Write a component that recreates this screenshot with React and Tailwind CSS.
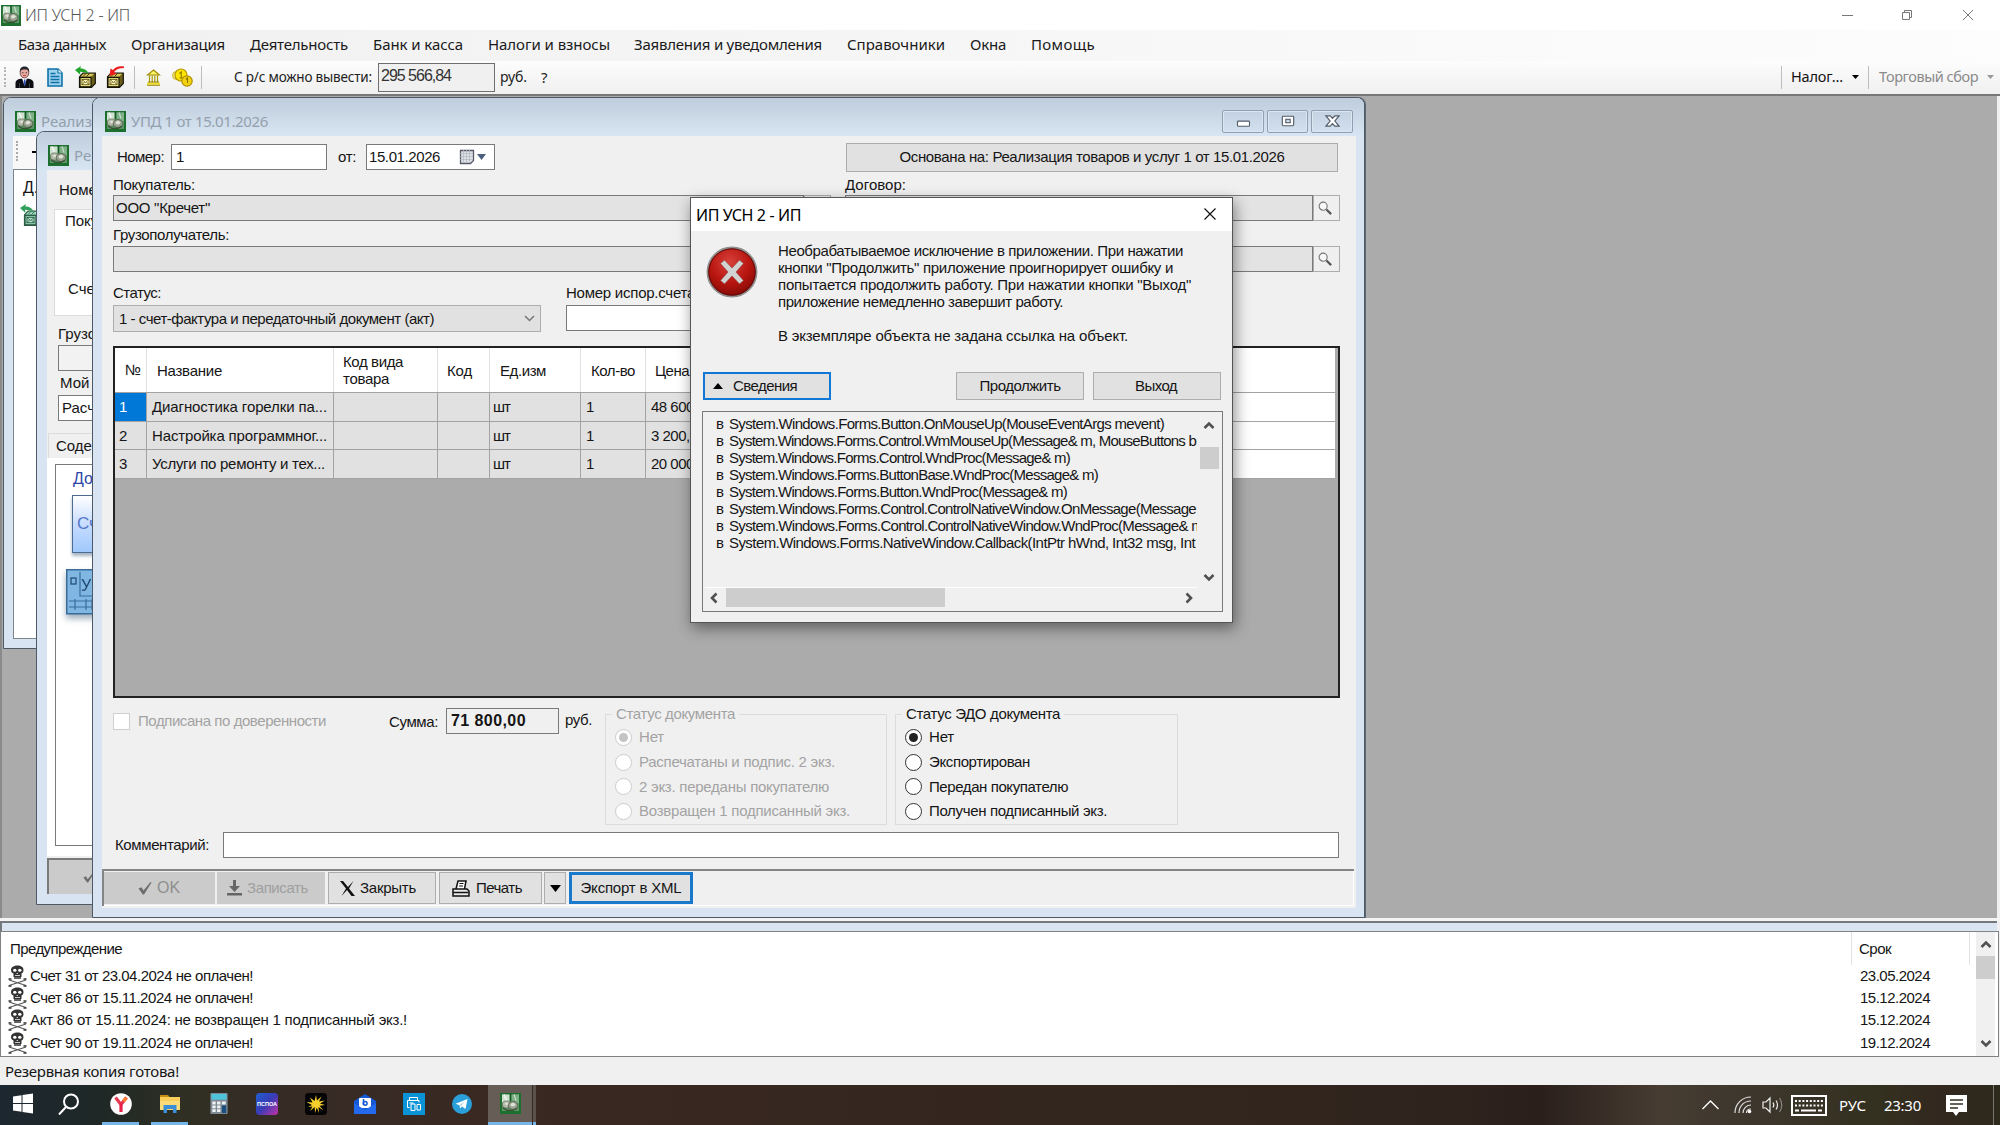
import React, { useLayoutEffect, useRef, useState } from "react";

/* A single-line label whose tracking is computed so that it spans `w` pixels. */
function T({ w, className = "", children }) {
  const ref = useRef(null);
  const [spacing, setSpacing] = useState(null);
  useLayoutEffect(() => {
    if (!w || spacing !== null) return;
    const natural = ref.current.getBoundingClientRect().width;
    setSpacing((w - natural) / Math.max(1, ref.current.textContent.length));
  }, [w, spacing]);
  return (
    <span
      ref={ref}
      className={`inline-block shrink-0 self-auto whitespace-pre ${className}`}
      style={spacing === null ? undefined : { letterSpacing: `${spacing}px`, width: `${w}px` }}
    >
      {children}
    </span>
  );
}

const SEGOE = "font-['Noto_Sans','Open_Sans',sans-serif]";

/* ---------- icons ---------- */

function AppIcon({ className = "w-[21px] h-[21px]" }) {
  return (
    <svg viewBox="0 0 21 21" preserveAspectRatio="none" className={`shrink-0 ${className}`}>
      <rect width="21" height="21" fill="#1d6f2e" />
      <rect x="2" y="1.500" width="17" height="16.500" fill="#5d9467" />
      <path d="M2 1.500h7.500v7L2 11z" fill="#cfe2d1" />
      <path d="M4 1.500l3 7" stroke="#f2f8f2" strokeWidth="1.500" />
      <path d="M11.500 1.500H19v9l-7.500-3z" fill="#7fb088" />
      <path d="M14 1.500l2 6" stroke="#c6dec9" strokeWidth="1.200" />
      <path d="M10.500 0v8" stroke="#0f5a20" strokeWidth="1.400" />
      <ellipse cx="6.500" cy="11.500" rx="4.200" ry="3.600" fill="#b3b9a8" stroke="#59644f" strokeWidth=".7" />
      <ellipse cx="13" cy="12.500" rx="4.800" ry="4" fill="#98a08e" stroke="#4b5643" strokeWidth=".7" />
      <path d="M10.500 11l2.500-1.500 2.800 1.800-1.800 2.200-3-.3z" fill="#dfe2d8" />
      <path d="M4.500 10.500l2.500-1 1.500 1.500-2 1.500z" fill="#e1e4da" />
      <path d="M3 15l4 2.300h6l4-2" stroke="#3a4d36" strokeWidth="1.200" fill="none" />
    </svg>
  );
}

function PersonIcon() {
  return (
    <svg viewBox="0 0 19 22" className="w-[19px] h-[22px]">
      <path d="M0.5 22v-5c0-2.5 2-3.6 5-4.2h8c3 .6 5 1.700 5 4.200v5z" fill="#0b0b12" />
      <path d="M7 12h5l-2.500 8z" fill="#fff" />
      <path d="M9 13.500h1.300l.6 4-1.200 2-1.200-2z" fill="#2a4fb5" />
      <ellipse cx="9.500" cy="6.800" rx="4.300" ry="5.200" fill="#e8a9a0" stroke="#40211c" strokeWidth=".7" />
      <path d="M4.800 6.500C4.500 1.800 7 .5 9.500.5s5.200 1.300 4.700 6c-1-2.500-1.500-3-4.700-3s-4 .8-4.700 3z" fill="#26262e" />
      <path d="M7.200 6.800h1.200M10.700 6.800h1.200" stroke="#222" />
      <path d="M8.200 9.500h2.600" stroke="#b03838" />
      <path d="M4.500 17v5M14.500 17v5" stroke="#4a4a55" strokeWidth=".7" />
    </svg>
  );
}

function DocIcon() {
  return (
    <svg viewBox="0 0 16 19" className="w-[16px] h-[19px]">
      <path d="M1 1h10l4 4v13H1z" fill="#9fd2ee" stroke="#0d72a8" strokeWidth="1.600" />
      <path d="M11 1v4h4" fill="#fff" stroke="#0d72a8" strokeWidth="1.200" />
      <path d="M3.500 5.500h5M3.500 8.500h9M3.500 11.500h9M3.500 14.500h9" stroke="#0d72a8" strokeWidth="1.500" />
    </svg>
  );
}

function BoxIcon({ arrow, faded = false }) {
  const line = faded ? "#2f5a45" : "#161406";
  return (
    <svg viewBox="0 0 21 22" className="h-[22px] w-[21px] shrink-0">
      <path d="M4.500 11L8 7.200h12.300v10.300L16.500 21.300h-12z" fill={faded ? "#4f9a78" : "#6b5e1d"} stroke={line} strokeWidth="1.200" />
      <path d="M5.500 10.500l3-2.800h10.800l-3 2.800z" fill={faded ? "#9ad8b9" : "#d9c95a"} />
      <path d="M11 7.500l-3 3M14.500 7.500l-3 3" stroke={line} strokeWidth=".8" />
      <rect x="5" y="11.500" width="11" height="9.300" fill={faded ? "#8bcfac" : "#f1e588"} stroke={line} strokeWidth="1.200" />
      <rect x="7" y="13.500" width="7" height="5.200" fill={faded ? "#b4e3cc" : "#fdf7b5"} stroke={faded ? line : "#5a5118"} strokeWidth=".8" />
      <path d="M7 13.500l3.500 3 3.500-3M7 18.700l2.500-2.700M14 18.700l-2.500-2.700" fill="none" stroke={faded ? line : "#5a5118"} strokeWidth=".8" />
      {arrow === "green" ? (
        <path d="M0 4l6-4-.7 2.500c4 0 7 1.500 8 5C11 6.500 8.500 6 5 5.800L5.500 9z" fill={faded ? "#2f9f5b" : "#21a52b"} />
      ) : (
        <path d="M21 .5c-5-.8-9 .5-11 3.500L7.500 2.500 6.500 10l7-2-2.300-2C13 3.500 16 2 21 2z" fill="#ee1c1c" />
      )}
    </svg>
  );
}

function BankIcon() {
  return (
    <svg viewBox="0 0 15 17" className="w-[15px] h-[17px]">
      <path d="M7.500 1L13.500 6h-12z" fill="#fdf36a" stroke="#a08c00" strokeWidth="1.200" />
      <path d="M3.500 6.500v7M6.200 6.500v7M8.800 6.500v7M11.500 6.500v7" stroke="#a99700" strokeWidth="1.200" />
      <path d="M1 14.700h13" stroke="#f0df20" strokeWidth="2" />
      <path d="M1 16.300h13M2 13h11" stroke="#8a7900" strokeWidth=".9" />
    </svg>
  );
}

function CoinsIcon() {
  return (
    <svg viewBox="0 0 21 19" className="w-[21px] h-[19px]">
      <circle cx="4.500" cy="7.500" r="4" fill="#efe08a" stroke="#c9b019" strokeWidth=".9" />
      <circle cx="9" cy="7" r="6" fill="#ffe600" stroke="#b89b00" strokeWidth="1.200" />
      <path d="M7.500 5.500L9.200 4v6M7.500 10h3.500" stroke="#8a7400" strokeWidth="1.100" fill="none" />
      <circle cx="15" cy="13" r="5.200" fill="#f3d311" stroke="#b08f00" strokeWidth="1.200" />
      <path d="M14 11.500l1.500-1.500v5" stroke="#8a7400" strokeWidth="1.100" fill="none" />
    </svg>
  );
}

function Tri({ dir = "down", className = "w-[8px] h-[5px]", fill = "#000" }) {
  return (
    <svg viewBox="0 0 10 6" preserveAspectRatio="none" className={`shrink-0 ${className}`}>
      <path d={dir === "down" ? "M0 0h10L5 6z" : "M0 6h10L5 0z"} fill={fill} />
    </svg>
  );
}

const chevrons = { up: "M1.500 7L6 2.500 10.500 7", down: "M1.500 2L6 6.500 10.500 2", left: "M7.500 1.500L3 6l4.500 4.500", right: "M3.500 1.500L8 6l-4.500 4.500" };
function Chev({ dir, className, stroke = "#505050", sw = 2.6 }) {
  return (
    <svg viewBox={dir === "up" || dir === "down" ? "0 0 12 9" : "0 0 11 12"} className={`shrink-0 ${className}`}>
      <path d={chevrons[dir]} fill="none" stroke={stroke} strokeWidth={sw} />
    </svg>
  );
}

function Loupe() {
  return (
    <svg viewBox="0 0 16 16" className="w-[15px] h-[15px]">
      <circle cx="5.500" cy="5.500" r="4.300" fill="#f7f7f7" stroke="#777" strokeWidth="1.200" />
      <path d="M9 9l5 5" stroke="#555" strokeWidth="2.300" />
    </svg>
  );
}

function Check({ className }) {
  return (
    <svg viewBox="0 0 14 14" className={className}>
      <path d="M.5 7.500l3-1.300 2 3.300L12.500 1l1 .6L6 13.500H4.800z" fill="#6d6d6d" />
    </svg>
  );
}

function Skull() {
  return (
    <svg viewBox="0 0 19 22" className="w-[19px] h-[22px] shrink-0">
      <path d="M3 5c0-3 3-4.500 6.500-4.500S15.500 2 15.500 5c0 2-.7 3-2 3.500V12h-8V8.500C4 8 3 7 3 5z" fill="#333" />
      <ellipse cx="6.800" cy="5.200" rx="1.700" ry="1.500" fill="#fff" />
      <ellipse cx="11.800" cy="5.200" rx="1.700" ry="1.500" fill="#fff" />
      <path d="M8.600 8.500h1.400M7 10.500h5" stroke="#ddd" strokeWidth=".9" />
      <path d="M1 15l17 5.500M18 15L1 20.500" stroke="#555" strokeWidth="1.300" />
      <path d="M.5 14h3M15.500 14h3M.5 21h3M15.500 21h3M6 13h7" stroke="#333" strokeWidth="1.400" />
    </svg>
  );
}

/* ---------- small controls ---------- */

const Sep = ({ className = "" }) => <div className={`h-[23px] w-px bg-[#bdbdbd] ${className}`} />;

function Field({ className = "", children }) {
  return (
    <div className={`flex h-[26px] shrink-0 items-center border border-[#7a7a7a] ${className}`}>{children}</div>
  );
}

function LoupeButton({ className = "" }) {
  return (
    <div className={`flex h-[26px] w-[27px] shrink-0 items-center justify-center border border-[#adadad] bg-[#efefef] pr-[2px] ${className}`}>
      <Loupe />
    </div>
  );
}

function Radio({ checked, disabled }) {
  return (
    <span className={`flex size-[17px] shrink-0 items-center justify-center rounded-full border bg-white ${disabled ? "border-[#cccccc]" : "border-[#333]"}`}>
      {checked && <span className={`size-[9px] rounded-full ${disabled ? "bg-[#c4c4c4]" : "bg-[#222]"}`} />}
    </span>
  );
}

function GroupBox({ title, titleWidth, items, disabled, className }) {
  return (
    <div className={`relative mt-[16px] h-[111px] border border-[#dcdcdc] pt-[10px] pl-[9px] ${disabled ? "text-[#a3a3a3]" : ""} ${className}`}>
      <div className="absolute -top-[12px] left-[6px] flex h-[22px] items-center bg-[#f0f0f0] px-[4px]">
        <T w={titleWidth}>{title}</T>
      </div>
      {items.map(([label, w], i) => (
        <div key={label} className="flex h-[24.700px] items-center gap-[7px]">
          <Radio checked={i === 0} disabled={disabled} />
          <T w={w}>{label}</T>
        </div>
      ))}
    </div>
  );
}

/* ---------- top bars ---------- */

const menu = [
  ["База данных", 88, "ml-[18px]"],
  ["Организация", 94, "ml-[25px]"],
  ["Деятельность", 98, "ml-[25px]"],
  ["Банк и касса", 90, "ml-[25px]"],
  ["Налоги и взносы", 122, "ml-[25px]"],
  ["Заявления и уведомления", 188, "ml-[24px]"],
  ["Справочники", 98, "ml-[25px]"],
  ["Окна", 36, "ml-[25px]"],
  ["Помощь", 64, "ml-[25px]"],
];

function TitleBar() {
  return (
    <div className={`flex h-[30px] items-center bg-white pl-px ${SEGOE}`}>
      <AppIcon className="h-[21px] w-[20px]" />
      <T w={105} className="ml-[4px] font-light text-[16px] text-[#555]">ИП УСН 2 - ИП</T>
      <svg viewBox="0 0 132 14" className="mr-[26px] mb-px ml-auto h-[14px] w-[132px]" fill="none" stroke="#777" strokeWidth="1">
        <path d="M0 7.500h11" />
        <path d="M60.500 4.500h7v7h-7zM62.500 4.500v-2h7v7h-2" />
        <path d="M121 2l10 10M131 2l-10 10" />
      </svg>
    </div>
  );
}

function MenuBar() {
  return (
    <div className={`flex h-[31px] items-center bg-gradient-to-r from-[#f0f0f0] to-[#fdfdfd] pb-[3px] text-[15px] text-[#1a1a1a] ${SEGOE}`}>
      {menu.map(([label, w, ml]) => (
        <T key={label} w={w} className={ml}>{label}</T>
      ))}
    </div>
  );
}

function Toolbar() {
  return (
    <div className={`flex h-[35px] items-center border-b-2 border-[#777] bg-gradient-to-b from-[#fdfdfd] to-[#efefef] pb-px ${SEGOE}`}>
      <div className="ml-[4px] h-[20px] border-l-2 border-dotted border-[#b5b5b5]" />
      <div className="ml-[9px]"><PersonIcon /></div>
      <div className="ml-[13px]"><DocIcon /></div>
      <div className="ml-[12px]"><BoxIcon arrow="green" /></div>
      <div className="ml-[7px]"><BoxIcon arrow="red" /></div>
      <Sep className="ml-[10px]" />
      <div className="ml-[11px]"><BankIcon /></div>
      <div className="ml-[11px]"><CoinsIcon /></div>
      <Sep className="ml-[8px]" />
      <T w={138} className="ml-[32px] text-[13.500px] text-[#222]">С р/с можно вывести:</T>
      <div className="ml-[6px] flex h-[29px] w-[117px] items-start border border-[#6f6f6f] bg-[#f0f0f0] pl-[2px] font-['Liberation_Sans',sans-serif]">
        <T w={70} className="text-[16px] leading-[24px] text-[#333]">295 566,84</T>
      </div>
      <T w={27} className="ml-[5px] text-[14px] text-[#222]">руб.</T>
      <T w={7} className="ml-[14px] text-[15px] text-[#222]">?</T>
      <Sep className="ml-auto" />
      <T w={52} className="mb-[2px] ml-[9px] text-[14.500px] text-[#111]">Налог...</T>
      <Tri className="ml-[9px] h-[4px] w-[7px]" />
      <Sep className="ml-[9px]" />
      <T w={99} className="mb-[2px] ml-[10px] text-[14.500px] text-[#8a8a8a]">Торговый сбор</T>
      <Tri className="mr-[6px] ml-[9px] h-[4px] w-[7px]" fill="#9a9a9a" />
    </div>
  );
}

/* ---------- child windows behind ---------- */

function ChildTitle({ text, className = "" }) {
  return (
    <div className={`flex h-[38px] shrink-0 items-center bg-gradient-to-b from-[#bfcddc] to-[#d8e5f2] ${className}`}>
      <AppIcon className="ml-[11px] h-[21px] w-[21px]" />
      <T className={`ml-[5px] text-[15px] text-[#93a0ad] ${SEGOE}`}>{text}</T>
    </div>
  );
}

function ListWindow() {
  return (
    <div className="absolute top-[1px] left-[3px] flex h-[552px] w-[300px] flex-col overflow-hidden rounded-tl-[8px] border border-[#4d5a66] bg-[#d8e4f1] pb-[9px]">
      <ChildTitle text="Реализ" className="pt-[8px]" />
      <div className="ml-[9px] flex h-[33px] shrink-0 items-start bg-[#f8f8f8]">
        <div className="mt-[5px] ml-[3px] h-[20px] border-l-2 border-dotted border-[#a9a9a9]" />
        <div className="mt-[15px] ml-[14px] h-[2px] w-[8px] bg-black" />
      </div>
      <div className="ml-[9px] flex-1 border border-[#7c868f] bg-white pt-[8px] pl-[6px]">
        <div className="pl-[3px]"><T className="text-[16px] leading-[20px]">Д.</T></div>
        <div className="mt-[6px]"><BoxIcon arrow="green" faded /></div>
      </div>
    </div>
  );
}

function SaleWindow() {
  return (
    <div className="absolute top-[35px] left-[36px] flex h-[774px] w-[400px] flex-col overflow-hidden rounded-tl-[8px] border border-[#4d5a66] bg-[#d8e4f1] pb-[10px]">
      <ChildTitle text="Ре" className="pt-[8px]" />
      <div className="ml-[10px] flex flex-1 flex-col bg-[#f0f0f0]">
        <div className="flex h-[39px] shrink-0 items-center pl-[12px]"><T>Номе</T></div>
        <div className="ml-[7px] flex h-[107px] shrink-0 flex-col border border-[#dcdcdc] bg-white pl-[10px]">
          <T className="mt-[1px]">Поку</T>
          <T className="mt-[48px] ml-[3px]">Сче</T>
        </div>
        <div className="flex h-[29px] shrink-0 items-center pt-[6px] pl-[11px]"><T>Грузо</T></div>
        <div className="ml-[11px] h-[26px] shrink-0 border border-[#7a7a7a] bg-[#f2f2f2]" />
        <div className="flex h-[24px] shrink-0 items-center pl-[13px]"><T>Мой</T></div>
        <div className="ml-[11px] flex h-[26px] shrink-0 items-center border border-[#7a7a7a] bg-white pl-[3px]"><T>Расч</T></div>
        <div className="mt-[12px] ml-[1px] flex h-[25px] shrink-0 items-center border border-b-0 border-[#dcdcdc] pl-[7px]"><T>Содер</T></div>
        <div className="flex h-[398px] shrink-0 flex-col bg-white pt-[6px]">
          <div className="ml-[8px] flex h-[382px] flex-col border border-[#7a7a7a]">
            <T className="mt-[4px] ml-[17px] text-[16px] text-[#2d46a8]">До</T>
            <div className="mt-[6px] ml-[16px] flex h-[58px] items-center border border-[#4d6c93] bg-gradient-to-b from-white via-[#c7dcff] to-[#9fc8fb] pl-[4px] shadow-[0_3px_3px_rgba(60,90,120,0.45)]">
              <T className="text-[17px] text-[#5577c9]">Сч</T>
            </div>
            <svg viewBox="0 0 60 46" className="mt-[16px] ml-[10px] h-[46px] w-[60px] shrink-0 drop-shadow-[0_4px_3px_rgba(60,90,120,0.5)]">
              <rect x=".75" y=".75" width="58" height="44" fill="#7fb6e2" stroke="#3a6d99" strokeWidth="1.500" />
              <rect x="5" y="9" width="5" height="6" fill="none" stroke="#1e4872" strokeWidth="1.200" />
              <path d="M14 3v24h44M3 32h54M3 38h54M9 30v11M20 30v11M26 30v11" stroke="#3b6d9b" strokeWidth="1.200" fill="none" />
              <text x="15" y="22" fontSize="16" fill="#1e4872" fontFamily="Liberation Sans">УП</text>
            </svg>
          </div>
        </div>
        <div className="mt-[2px] flex h-[36px] items-center border-t-2 border-l-2 border-[#7a7a7a] bg-[#cbcbcb] pl-[33px]">
          <Check className="h-[12px] w-[14px]" />
        </div>
      </div>
    </div>
  );
}

/* ---------- main document window ---------- */

function WindowButtons() {
  const box = "flex h-[23px] items-center justify-center rounded-[2px] border border-[#8fa0b3] bg-gradient-to-b from-[#c3d1e2] to-[#d3e0ee] shadow-[inset_0_0_0_1px_#dbe6f1]";
  return (
    <div className="mr-[3px] ml-auto flex gap-[3px]">
      <div className={`${box} w-[42px]`}>
        <svg viewBox="0 0 16 14" className="mt-[2px] h-[12px] w-[15px]"><rect x="1" y="6" width="14" height="6" rx="1" fill="#fff" stroke="#525c68" strokeWidth="1.300" /></svg>
      </div>
      <div className={`${box} w-[41px]`}>
        <svg viewBox="0 0 16 14" preserveAspectRatio="none" className="h-[12px] w-[14px]" stroke="#525c68" strokeWidth="1.300">
          <rect x="1.500" y="1.500" width="13" height="11" rx="1" fill="#fff" />
          <rect x="5.500" y="5" width="5" height="4" fill="#d5dfea" />
        </svg>
      </div>
      <div className={`${box} w-[42px]`}>
        <svg viewBox="0 0 16 14" preserveAspectRatio="none" className="h-[12px] w-[15px]">
          <path d="M1 1h4.500L8 4l2.500-3H15l-4.500 6L15 13h-4.500L8 10l-2.500 3H1l4.500-6z" fill="#fff" stroke="#525c68" strokeWidth="1.300" />
        </svg>
      </div>
    </div>
  );
}

const gridRows = [
  ["1", "Диагностика горелки па...", 175, "48 600,00"],
  ["2", "Настройка программног...", 175, "3 200,00"],
  ["3", "Услуги по ремонту и тех...", 173, "20 000,00"],
];
const GRID = "grid grid-cols-[32px_187px_104px_52px_91px_65px_90px_1fr]";

function ItemsGrid() {
  const head = "flex items-center border-r border-[#e2e2e2]";
  const cell = "flex items-center border-r border-b border-[#a3a3a3] bg-[#e1e1e1]";
  return (
    <div className="mt-[14px] ml-[11px] h-[352px] w-[1227px] border-2 border-[#222] bg-[#ababab] pr-[3px]">
      <div className={`${GRID} h-[45px] border-b border-[#a3a3a3] bg-white`}>
        <div className={`${head} pl-[10px]`}><T w={15}>№</T></div>
        <div className={`${head} pt-[2px] pl-[10px]`}><T w={65}>Название</T></div>
        <div className={`${head} flex-col items-start! justify-center pl-[9px] leading-[17px]`}>
          <T w={60}>Код вида</T>
          <T w={46}>товара</T>
        </div>
        <div className={`${head} pt-[2px] pl-[9px]`}><T w={25}>Код</T></div>
        <div className={`${head} pt-[2px] pl-[10px]`}><T w={46}>Ед.изм</T></div>
        <div className={`${head} pt-[2px] pl-[10px]`}><T w={44}>Кол-во</T></div>
        <div className={`${head} pt-[2px] pl-[9px]`}><T w={34}>Цена</T></div>
        <div />
      </div>
      {gridRows.map(([n, name, w, price]) => (
        <div key={n} className={`${GRID} h-[28.700px]`}>
          <div className={`${cell} pl-[4px] ${n === "1" ? "bg-[#0078d7]! text-white" : ""}`}>{n}</div>
          <div className={`${cell} pl-[5px]`}><T w={w}>{name}</T></div>
          <div className={cell} />
          <div className={cell} />
          <div className={`${cell} pl-[3px]`}><T w={17}>шт</T></div>
          <div className={`${cell} pl-[5px]`}>1</div>
          <div className={`${cell} pl-[5px]`}><T className="tracking-[-0.500px]">{price}</T></div>
          <div className="border-b border-[#a3a3a3] bg-white" />
        </div>
      ))}
    </div>
  );
}

function DocumentWindow() {
  return (
    <div className="absolute top-[1px] left-[92px] flex h-[821px] w-[1273px] flex-col overflow-hidden rounded-t-[8px] border border-[#4d5a66] bg-[#d8e4f1] pr-[8px] pb-[9px] pl-[9px] shadow-[1px_0_0_#5c6874]">
      <div className="-mr-[8px] -ml-[9px] flex h-[38px] shrink-0 items-center bg-gradient-to-b from-[#bfcddc] to-[#d8e5f2] pt-[8px] pr-[8px]">
        <AppIcon className="ml-[12px] h-[21px] w-[21px]" />
        <T w={137} className={`ml-[5px] text-[15px] text-[#93a0ad] ${SEGOE}`}>УПД 1 от 15.01.2026</T>
        <WindowButtons />
      </div>
      <div className="flex flex-1 flex-col bg-[#f0f0f0]">
        <div className="flex h-[42px] items-center">
          <T w={47} className="ml-[15px]">Номер:</T>
          <Field className="ml-[7px] w-[156px] bg-white pl-[4px]">1</Field>
          <T w={18} className="ml-[11px]">от:</T>
          <Field className="ml-[10px] w-[129px] bg-white pl-[2px]">
            <T w={71}>15.01.2026</T>
            <svg viewBox="0 0 16 16" className="ml-[19px] size-[16px]">
              <path d="M1.500 1.500h13v10l-3 3h-10z" fill="#dfe1e8" stroke="#565a66" strokeWidth="1.300" />
              <path d="M1 4.500h13M1 7.500h13M1 10.500h13M4.500 1v13M7.500 1v13M10.500 1v13" stroke="#b3b7c2" strokeWidth=".7" />
            </svg>
            <Tri className="ml-[2px] h-[6px] w-[9px]" fill="#4b6080" />
          </Field>
          <div className="ml-[351px] flex h-[29px] w-[492px] items-center justify-center border border-[#adadad] bg-[#e1e1e1]">
            <T w={385}>Основана на: Реализация товаров и услуг 1 от 15.01.2026</T>
          </div>
        </div>
        <div className="flex h-[17px] items-center pb-[4px] pl-[11px]">
          <T w={82}>Покупатель:</T>
          <T w={61} className="ml-[650px]">Договор:</T>
        </div>
        <div className="flex pl-[11px]">
          <Field className="w-[691px] bg-[#e3e3e3] pl-[2px]"><T w={94}>ООО "Кречет"</T></Field>
          <LoupeButton />
          <Field className="ml-[14px] w-[468px] bg-[#e3e3e3]" />
          <LoupeButton />
        </div>
        <div className="flex h-[25px] items-center pt-[2px] pl-[11px]"><T w={116}>Грузополучатель:</T></div>
        <div className="flex pl-[11px]">
          <Field className="w-[691px] bg-[#e3e3e3]" />
          <LoupeButton />
          <Field className="ml-[14px] w-[468px] bg-[#e3e3e3]" />
          <LoupeButton />
        </div>
        <div className="flex h-[33px] items-center pt-[9px] pl-[11px]">
          <T w={48}>Статус:</T>
          <T w={133} className="ml-[405px]">Номер испор.счета:</T>
        </div>
        <div className="flex h-[27px] pl-[11px]">
          <div className="flex w-[428px] items-center border border-[#adadad] bg-[#e1e1e1] pl-[5px]">
            <T w={315}>1 - счет-фактура и передаточный документ (акт)</T>
            <Chev dir="down" className="mr-[4px] ml-auto h-[9px] w-[13px]" stroke="#777" sw={1.5} />
          </div>
          <Field className="ml-[25px] w-[200px] bg-white" />
        </div>
        <ItemsGrid />
        <div className="flex h-[134px] items-start pl-[11px]">
          <div className="mt-[15px] size-[17px] border border-[#cfcfcf] bg-white" />
          <div className="mt-[10px] ml-[8px] flex h-[26px] items-center text-[#a3a3a3]"><T w={188}>Подписана по доверенности</T></div>
          <div className="mt-[10px] ml-[63px] flex h-[28px] items-center"><T w={49}>Сумма:</T></div>
          <Field className="mt-[10px] ml-[8px] w-[113px] pl-[4px]"><T w={75} className="text-[16px] font-bold">71 800,00</T></Field>
          <div className="mt-[10px] ml-[6px] flex h-[24px] items-center"><T w={27}>руб.</T></div>
          <GroupBox
            className="ml-[13px] w-[282px]"
            disabled
            title="Статус документа"
            titleWidth={119}
            items={[["Нет", 25], ["Распечатаны и подпис. 2 экз.", 196], ["2 экз. переданы покупателю", 190], ["Возвращен 1 подписанный экз.", 211]]}
          />
          <GroupBox
            className="ml-[8px] w-[283px]"
            title="Статус ЭДО документа"
            titleWidth={154}
            items={[["Нет", 25], ["Экспортирован", 101], ["Передан покупателю", 139], ["Получен подписанный экз.", 178]]}
          />
        </div>
        <div className="flex items-center pl-[13px]">
          <T w={94}>Комментарий:</T>
          <div className="ml-[14px] h-[26px] w-[1116px] border border-[#7a7a7a] bg-white" />
        </div>
        <div className="mt-[11px] mr-[2px] flex h-[37px] items-stretch gap-[2px] border-t-2 border-l-2 border-[#858585] pt-[1px] pb-[2px] shadow-[inset_-1px_-1px_0_#fff]">
          <div className="flex w-[111px] items-center bg-[#cbcbcb] pl-[34px] text-[#8f8f8f]">
            <Check className="h-[14px] w-[14px]" />
            <T w={23} className="ml-[5px] text-[16px]">OK</T>
          </div>
          <div className="flex w-[108px] items-center bg-[#cbcbcb] pl-[10px] text-[#9f9f9f]">
            <svg viewBox="0 0 15 16" className="h-[16px] w-[15px]"><path d="M6 0h3v6h4l-5.500 6L2 6h4zM0 13h15v2.500H0z" fill="#666" /></svg>
            <T w={61} className="ml-[5px]">Записать</T>
          </div>
          <div className="ml-px flex w-[108px] items-center border border-[#adadad] bg-[#e1e1e1] pl-[11px]">
            <svg viewBox="0 0 15 15" className="h-[15px] w-[15px]"><path d="M0 0h3l5 6 5.500-6L9 7.500l6 7.500h-3.500L7 9l-5.500 6L6 7.500z" fill="#111" /></svg>
            <T w={56} className="ml-[5px]">Закрыть</T>
          </div>
          <div className="ml-px flex w-[103px] items-center border border-[#adadad] bg-[#e1e1e1] pl-[12px]">
            <svg viewBox="0 0 18 17" className="h-[17px] w-[18px]" fill="none" stroke="#111" strokeWidth="1.500">
              <path d="M4 9L6 1h8l-1.500 8" fill="#fff" />
              <path d="M7.500 3.500h4M7 6h4" strokeWidth="1.100" />
              <path d="M1 9h14l2 2v5H1z" fill="#e8e8e8" />
              <path d="M1 12.500h15.500" />
            </svg>
            <T w={46} className="ml-[6px]">Печать</T>
          </div>
          <div className="flex w-[22px] items-center justify-center border border-[#adadad] bg-[#e1e1e1]">
            <Tri className="h-[7px] w-[11px]" />
          </div>
          <div className="ml-px flex w-[124px] items-center justify-center border-[3px] border-[#1979ca] bg-[#e1e1e1]">
            <T w={101}>Экспорт в XML</T>
          </div>
        </div>
      </div>
    </div>
  );
}

/* ---------- error dialog ---------- */

const trace = [
  ["System.Windows.Forms.Button.OnMouseUp(MouseEventArgs mevent)", 435],
  ["System.Windows.Forms.Control.WmMouseUp(Message& m, MouseButtons b", 467],
  ["System.Windows.Forms.Control.WndProc(Message& m)", 341],
  ["System.Windows.Forms.ButtonBase.WndProc(Message& m)", 369],
  ["System.Windows.Forms.Button.WndProc(Message& m)", 338],
  ["System.Windows.Forms.Control.ControlNativeWindow.OnMessage(Message", 467],
  ["System.Windows.Forms.Control.ControlNativeWindow.WndProc(Message& m", 474],
  ["System.Windows.Forms.NativeWindow.Callback(IntPtr hWnd, Int32 msg, Int", 466],
];

function ErrorDialog() {
  return (
    <div className="absolute top-[101px] left-[690px] flex h-[426px] w-[543px] flex-col border border-[#555] bg-[#f0f0f0] shadow-[2px_5px_14px_rgba(0,0,0,0.45)]">
      <div className={`flex h-[33px] shrink-0 items-center bg-white ${SEGOE}`}>
        <T w={105} className="ml-[5px] text-[16px] text-black">ИП УСН 2 - ИП</T>
        <svg viewBox="0 0 12 12" className="mr-[16px] mb-[2px] ml-auto size-[12px]"><path d="M.5.5l11 11M11.500.5l-11 11" stroke="#111" strokeWidth="1.200" /></svg>
      </div>
      <div className="flex h-[141px] shrink-0">
        <svg viewBox="0 0 52 52" className="mt-[15px] ml-[15px] size-[52px]">
          <defs>
            <radialGradient id="err" cx="45%" cy="30%" r="75%">
              <stop offset="0" stopColor="#d8403a" />
              <stop offset=".55" stopColor="#b8150f" />
              <stop offset="1" stopColor="#7c0906" />
            </radialGradient>
          </defs>
          <circle cx="26" cy="26" r="24.500" fill="url(#err)" stroke="#8e8e8e" strokeWidth="1.800" />
          <circle cx="26" cy="26" r="23.200" fill="none" stroke="#5d0a08" strokeWidth="1" />
          <path d="M18.500 14l7.500 8 7.500-8 4 3.500-7.500 8.500 7.500 8.500-4 3.500-7.500-8-7.500 8-4-3.500L22 26l-7.500-8.500z" fill="#d2d2d2" stroke="#8c3a36" strokeWidth=".6" />
        </svg>
        <div className="mt-[11px] ml-[20px] flex flex-col items-start leading-[17px]">
          <T w={405}>Необрабатываемое исключение в приложении. При нажатии</T>
          <T w={395}>кнопки "Продолжить" приложение проигнорирует ошибку и</T>
          <T w={413}>попытается продолжить работу. При нажатии кнопки "Выход"</T>
          <T w={285}>приложение немедленно завершит работу.</T>
          <T w={350} className="mt-[17px]">В экземпляре объекта не задана ссылка на объект.</T>
        </div>
      </div>
      <div className="flex h-[28px] shrink-0 pr-[11px] pl-[12px]">
        <div className="flex w-[128px] items-center border-2 border-[#0f78d4] bg-[#e1e1e1] pl-[8px]">
          <Tri dir="up" className="h-[6px] w-[10px]" />
          <T w={64} className="ml-[10px]">Сведения</T>
        </div>
        <div className="ml-auto flex w-[128px] items-center justify-center border border-[#adadad] bg-[#e1e1e1]"><T w={81}>Продолжить</T></div>
        <div className="ml-[9px] flex w-[128px] items-center justify-center border border-[#adadad] bg-[#e1e1e1] pr-[2px]"><T w={42}>Выход</T></div>
      </div>
      <div className="mt-[11px] ml-[11px] flex h-[201px] w-[521px] flex-col border border-[#7a7a7a] px-[2px] pt-[2px] pb-[3px]">
        <div className="flex flex-1">
          <div className="flex w-[492px] flex-col overflow-hidden border-b border-white pt-[1px] pl-[11px] leading-[17px]">
            {trace.map(([line, w]) => (
              <div key={line} className="flex">
                <T w={8} className="mr-[5px]">в</T>
                <T w={w}>{line}</T>
              </div>
            ))}
          </div>
          <div className="mr-px ml-auto flex w-[20px] flex-col items-center pt-[7px] pb-[6px]">
            <Chev dir="up" className="h-[9px] w-[12px]" />
            <div className="mt-[17px] h-[22px] w-[19px] bg-[#cdcdcd]" />
            <Chev dir="down" className="mt-auto h-[9px] w-[12px]" />
          </div>
        </div>
        <div className="flex h-[20px] shrink-0 items-center pb-px pl-[4px]">
          <Chev dir="left" className="h-[12px] w-[11px]" />
          <div className="ml-[6px] h-[19px] w-[219px] bg-[#cdcdcd]" />
          <Chev dir="right" className="mr-[26px] ml-auto h-[12px] w-[11px]" />
        </div>
      </div>
    </div>
  );
}

/* ---------- warnings list and status ---------- */

const warnings = [
  ["Счет 31 от 23.04.2024 не оплачен!", 223, "23.05.2024"],
  ["Счет 86 от 15.11.2024 не оплачен!", 223, "15.12.2024"],
  ["Акт 86 от 15.11.2024: не возвращен 1 подписанный экз.!", 377, "15.12.2024"],
  ["Счет 90 от 19.11.2024 не оплачен!", 223, "19.12.2024"],
];

function Warnings() {
  return (
    <div className="flex h-[126px] w-[1999px] border border-[#808285] bg-white">
      <div className="flex w-[1851px] flex-col">
        <div className="flex h-[33px] items-center border-r border-[#e2e2e2] pl-[9px]"><T w={112}>Предупреждение</T></div>
        {warnings.map(([text, w]) => (
          <div key={text} className="flex h-[22.200px] items-center pl-[7px]">
            <Skull />
            <T w={w} className="ml-[3px]">{text}</T>
          </div>
        ))}
      </div>
      <div className="flex w-[118px] flex-col pl-[7px]">
        <div className="flex h-[33px] items-center border-r border-[#e2e2e2]"><T w={32}>Срок</T></div>
        {warnings.map(([text, , date]) => (
          <div key={text} className="flex h-[22.200px] items-center pl-px"><T w={70}>{date}</T></div>
        ))}
      </div>
      <div className="mr-[3px] ml-auto flex w-[19px] flex-col items-center bg-[#f0f0f0] pt-[8px] pb-[8px]">
        <Chev dir="up" className="h-[9px] w-[12px]" />
        <div className="mt-[7px] h-[23px] w-[19px] bg-[#cdcdcd]" />
        <Chev dir="down" className="mt-auto h-[9px] w-[12px]" />
      </div>
    </div>
  );
}

/* ---------- taskbar ---------- */

function Slot({ active, open, className, children }) {
  return (
    <div className={`flex h-full shrink-0 items-center justify-center border-b-[3px] ${open ? "border-[#76b5e8]" : "border-transparent"} ${active ? "bg-[#665d56]" : ""} ${className}`}>
      {children}
    </div>
  );
}

function Taskbar() {
  return (
    <div className={`flex h-[40px] items-center bg-[linear-gradient(90deg,#1d2730_0%,#1f2826_5%,#2f2f23_9%,#352c25_13%,#3a2822_25%,#35271f_45%,#2f241d_72%,#2a1f1b_77%,#463c32_83%,#3c362c_88%,#33301f_94%,#33281f_97%,#2d2a1c_100%)] text-white ${SEGOE}`}>
      <Slot className="w-[46px]">
        <svg viewBox="0 0 20 20" className="h-[21px] w-[20px]"><path d="M0 3l8.500-1.200v7.700H0zM9.500 1.600L20 0v9.500H9.500zM0 10.500h8.500v7.700L0 17zM9.500 10.500H20V20L9.500 18.400z" fill="#fff" /></svg>
      </Slot>
      <Slot className="w-[46px]">
        <svg viewBox="0 0 22 22" className="size-[22px]" fill="none" stroke="#fff" strokeWidth="2"><circle cx="13" cy="8.500" r="7" /><path d="M8 14l-7 7.500" /></svg>
      </Slot>
      <Slot open className="ml-[10px] w-[37px]">
        <svg viewBox="0 0 22 22" className="size-[22px]"><circle cx="11" cy="11" r="10.800" fill="#fff" /><path d="M5.500 4.500l5.500 7 5.500-7" fill="none" stroke="#e8384f" strokeWidth="3.200" /><path d="M11 10.500V19" stroke="#e8204a" strokeWidth="3.200" /><path d="M16.500 4.500l-3 3.800" stroke="#ff7a2e" strokeWidth="3.200" /></svg>
      </Slot>
      <Slot open className="ml-[12px] w-[37px]">
        <svg viewBox="0 0 20 20" className="size-[20px]"><path d="M0 1h8l2 2.500H0z" fill="#c98c12" /><rect y="3" width="20" height="13" fill="#f9cf59" /><path d="M0 7h20v9H0z" fill="#fcd979" /><path d="M3.500 19v-8h13v8h-3.500v-4h-6v4z" fill="#3a8fd6" /></svg>
      </Slot>
      <Slot className="ml-[12px] w-[37px]">
        <svg viewBox="0 0 18 22" className="h-[21px] w-[18px]"><rect width="18" height="22" rx="1" fill="#7f8b94" /><rect x="1" y="1" width="16" height="6" fill="#4fc3d9" /><path d="M2 9h3.500v3H2zM7 9h3.500v3H7zM12 9h4v3h-4zM2 13h3.500v3H2zM7 13h3.500v3H7zM2 17h3.500v3H2zM7 17h3.500v3H7z" fill="#eef2f4" /><rect x="12" y="13" width="4.500" height="8" fill="#1b4f80" /></svg>
      </Slot>
      <Slot className="ml-[11px] w-[37px]">
        <svg viewBox="0 0 22 22" className="size-[22px]">
          <defs><linearGradient id="nt" x1="0" y1="0" x2="1" y2="1"><stop offset="0" stopColor="#1f5fd0" /><stop offset=".5" stopColor="#3a3bb5" /><stop offset="1" stopColor="#c332a5" /></linearGradient></defs>
          <rect width="22" height="22" rx="3.500" fill="url(#nt)" />
          <text x="11" y="13" fontSize="5.500" fontWeight="bold" textAnchor="middle" fill="#fff" fontFamily="Liberation Sans">ПСПОА</text>
        </svg>
      </Slot>
      <Slot className="ml-[12px] w-[37px]">
        <svg viewBox="0 0 22 22" className="size-[22px]"><rect width="22" height="22" rx="3.500" fill="#050505" /><path d="M11 2l1 5.500 4.500-4-2.500 5 6-1-5 3 5 1.500-5.500.8 4 4.700-5-3.500.5 6-2.200-5.500-1.800 5.500-.3-6L5 18l2.500-4.500-4.500.5 4-2L1.500 9l6 .5L5 4.500l4.500 3.500z" fill="#f5cf2c" /></svg>
      </Slot>
      <Slot className="ml-[12px] w-[37px]">
        <svg viewBox="0 0 22 20" className="h-[20px] w-[22px]"><path d="M11 0l11 7v13H0V7z" fill="#1558d6" /><rect x="5" y="4" width="12" height="10" rx="1" fill="#fff" /><path d="M0 9l11 7 11-7v11H0z" fill="#2269ee" /><path d="M9.500 5v6" stroke="#1558d6" strokeWidth="1.600" /><circle cx="11.200" cy="9.300" r="1.900" fill="none" stroke="#1558d6" strokeWidth="1.500" /></svg>
      </Slot>
      <Slot className="ml-[12px] w-[37px]">
        <svg viewBox="0 0 22 22" className="size-[22px]" fill="none" stroke="#fff" strokeWidth="1"><rect width="22" height="22" fill="#0a93d6" stroke="none" /><path d="M6.500 7V4.500h8V7M6.500 14.500H4.500V7.500h11.500v2M8 17.500v-6.500h4v6.500zM6.500 10h4M14 11.500h3.500v5.500H14z" /></svg>
      </Slot>
      <Slot className="ml-[12px] w-[36px]">
        <svg viewBox="0 0 20 20" className="size-[20px]"><circle cx="10" cy="10" r="10" fill="#2b9fd9" /><path d="M3.500 9.800L15.500 5l-2 10-3.500-2.500-2 2-.5-3.300z" fill="#fff" /><path d="M7.500 11.200l5.500-4-4 4.600z" fill="#9cc9e4" /></svg>
      </Slot>
      <Slot active open className="ml-[8px] w-[44px]"><AppIcon className="h-[21px] w-[21px]" /></Slot>
      <div className="ml-px h-full w-[3px] border-b-[3px] border-[#76b5e8] bg-[#5b524b]" />

      <svg viewBox="0 0 17 10" className="ml-auto h-[10px] w-[17px]" fill="none" stroke="#fff" strokeWidth="1.300"><path d="M.5 9L8.500 1l8 8" /></svg>
      <svg viewBox="0 0 18 18" className="ml-[15px] size-[18px]" fill="none" stroke="#ddd" strokeWidth="1.200">
        <path d="M1 17C1 8 8 1 17 1M5 17C5 10 10 5 17 5M9 17c0-4.500 3.500-8 8-8" />
        <path d="M12.500 17c0-2.500 2-4 4.500-4" />
        <circle cx="15.500" cy="15.500" r="1.800" fill="#fff" stroke="none" />
      </svg>
      <svg viewBox="0 0 22 18" className="ml-[10px] h-[18px] w-[22px]" fill="none" stroke="#eee" strokeWidth="1.200">
        <path d="M1 6h3l4-4v14l-4-4H1zM11 6.500c1 1.500 1 3.500 0 5M14 4.500c2 2.500 2 6.500 0 9" />
        <path d="M17.500 2c3 4 3 10 0 14" stroke="#8b8680" />
      </svg>
      <svg viewBox="0 0 36 21" className="ml-[7px] h-[21px] w-[36px]" fill="none" stroke="#fff">
        <rect x="1" y="1" width="34" height="19" strokeWidth="2" />
        <path d="M4 6h28" strokeDasharray="2 1.700" strokeWidth="2" />
        <path d="M4 10.500h28" strokeDasharray="2 1.700" strokeWidth="2" />
        <path d="M4 15.500h4M10 15.500h15M27 15.500h4" strokeWidth="2" />
      </svg>
      <T w={27} className="ml-[12px] text-[15px]">РУС</T>
      <T w={37} className="ml-[18px] text-[15px]">23:30</T>
      <svg viewBox="0 0 21 21" className="mr-[26px] ml-[25px] size-[21px]"><path d="M0 0h21v17h-8l-3 4-3-4H0z" fill="#fff" /><path d="M4 5h13M4 9h13M4 13h8" stroke="#33301f" strokeWidth="1.300" /></svg>
      <div className="mr-[6px] h-full w-px bg-[#7a756c]" />
    </div>
  );
}

export default function App() {
  return (
    <div className="flex h-[1125px] w-[2000px] flex-col overflow-hidden bg-[#f0f0f0] font-['Liberation_Sans',Arial,sans-serif] text-[15px] leading-[20px] text-[#151515]">
      <TitleBar />
      <MenuBar />
      <Toolbar />
      <div className="relative mr-[3px] h-[822px] overflow-hidden border-l-2 border-[#8a8a8a] bg-[#ababab]">
        <div className="absolute inset-y-0 -left-[2px]">
          <ListWindow />
          <SaleWindow />
          <DocumentWindow />
          <ErrorDialog />
        </div>
      </div>
      <div className="h-[3px] bg-[#f4f4f4]" />
      <div className="mr-[3px] h-[10px] border-t-2 border-l-2 border-[#75797d] bg-[#dae5f1]" />
      <Warnings />
      <div className={`flex flex-1 items-center bg-[#f0f0f0] pl-[5px] ${SEGOE}`}>
        <T w={174} className="text-[15px]">Резервная копия готова!</T>
      </div>
      <Taskbar />
    </div>
  );
}
